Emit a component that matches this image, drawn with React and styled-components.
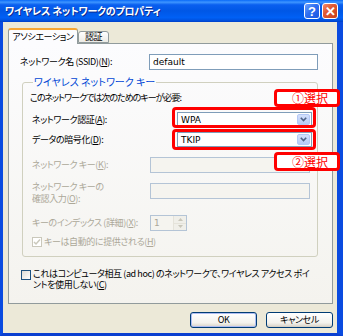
import React from 'react';
import styled, { createGlobalStyle } from 'styled-components';

const Global = createGlobalStyle`
  html, body { margin: 0; padding: 0; background: #ffffff; }
  body {
    font-family: "Noto Sans CJK JP", "Noto Sans", sans-serif;
    font-feature-settings: "palt";
  }
  * { box-sizing: border-box; }
`;

const Window = styled.div`
  position: relative;
  width: 343px;
  height: 336px;
  display: flex;
  flex-direction: column;
  overflow: hidden;
`;

const TitleBar = styled.div`
  height: 22px;
  flex: none;
  display: flex;
  align-items: center;
  justify-content: space-between;
  padding: 0 5px 0 5px;
  background: linear-gradient(
    to bottom,
    #0a6af8 0%,
    #3d95ff 10%,
    #0a5fef 22%,
    #0057e6 50%,
    #0060f5 80%,
    #0052e0 92%,
    #003fc8 100%
  );
`;

const Title = styled.div`
  color: #ffffff;
  font-weight: bold;
  font-size: 10px;
  letter-spacing: -0.2px;
  text-shadow: 1px 1px 0 #0b2a8f;
  line-height: 14px;
`;

const CaptionButtons = styled.div`
  display: flex;
  gap: 2px;
`;

const CapBtn = styled.div`
  width: 16px;
  height: 16px;
  border: 1px solid #ffffff;
  border-radius: 3px;
  display: flex;
  align-items: center;
  justify-content: center;
  color: #ffffff;
  font-family: "Liberation Sans", Arial, sans-serif;
  font-weight: bold;
  font-size: 13px;
  line-height: 1;
  background: ${p => p.$red
    ? 'linear-gradient(135deg, #f08a6c 0%, #e05a33 40%, #c8401a 100%)'
    : 'linear-gradient(135deg, #6ea2ff 0%, #2f6ff0 45%, #1c55e0 100%)'};
`;

const Frame = styled.div`
  flex: 1;
  display: flex;
  flex-direction: column;
  background: #ece9d8;
  border-left: 3px solid #0a4be0;
  border-right: 6px solid #0a4be0;
  border-bottom: 3px solid #0a3fd0;
  padding: 6px 4px 0 5px;
`;

const TabStrip = styled.div`
  display: flex;
  align-items: flex-end;
  height: 15px;
  position: relative;
  z-index: 1;
`;

const Tab = styled.div`
  height: ${p => (p.$active ? 16 : 12)}px;
  width: ${p => p.$w}px;
  margin-bottom: ${p => (p.$active ? -1 : 0)}px;
  border: 1px solid #919b9c;
  border-bottom: ${p => (p.$active ? 'none' : '1px solid #919b9c')};
  border-top: ${p => (p.$active ? '2px solid #f7a634' : '1px solid #919b9c')};
  border-radius: 3px 3px 0 0;
  background: ${p => (p.$active ? '#fcfcfe' : 'linear-gradient(#ffffff, #ecebe5)')};
  font-size: 9px;
  letter-spacing: -0.4px;
  line-height: ${p => (p.$active ? 13 : 10)}px;
  color: #000;
  text-align: center;
  white-space: nowrap;
`;

const Panel = styled.div`
  height: 261px;
  border: 1px solid #919b9c;
  background: linear-gradient(to bottom, #fcfcfe, #f4f3ee);
  padding: 10px 0 0 11px;
  display: flex;
  flex-direction: column;
`;

const Row = styled.div`
  display: flex;
  align-items: ${p => p.$align || 'center'};
  margin-top: ${p => p.$mt || 0}px;
  padding-left: ${p => p.$pl || 0}px;
`;

const Label = styled.div`
  width: ${p => p.$w}px;
  flex: none;
  font-size: 9px;
  letter-spacing: -0.4px;
  line-height: 12px;
  color: ${p => (p.$disabled ? '#aca899' : '#000')};
  white-space: nowrap;
`;

const TextBox = styled.div`
  width: ${p => p.$w}px;
  height: 16px;
  margin-left: ${p => p.$ml || 0}px;
  margin-top: ${p => p.$mt || 0}px;
  border: 1px solid ${p => (p.$disabled ? '#b4c4d6' : '#7f9db9')};
  background: ${p => (p.$disabled ? '#f5f4ef' : '#ffffff')};
  font-family: "DejaVu Sans", "Noto Sans CJK JP", sans-serif;
  font-size: 9px;
  line-height: 14px;
  padding-left: 3px;
  color: #000;
`;

const Group = styled.fieldset`
  margin: 6px 0 0 2px;
  width: 296px;
  height: 181px;
  border: 1px solid #d0d0bf;
  border-radius: 3px;
  padding: 4px 0 0 7px;
  display: flex;
  flex-direction: column;
`;

const Legend = styled.legend`
  color: #0046d5;
  font-size: 10px;
  line-height: 12px;
  padding: 0 1px;
  margin-left: 3px;
`;

const Text = styled.div`
  font-size: 9px;
  letter-spacing: -1px;
  line-height: 12px;
  color: #000;
  white-space: nowrap;
`;

const Select = styled.div`
  width: 135px;
  height: 15px;
  margin-left: 27px;
  border: 1px solid #7f9db9;
  background: #ffffff;
  display: flex;
  align-items: center;
  justify-content: space-between;
  padding: 0 1px 0 3px;
  font-family: "DejaVu Sans", sans-serif;
  font-size: 9px;
  color: #000;
`;

const DropBtn = styled.div`
  width: 13px;
  height: 11px;
  border-radius: 2px;
  background: linear-gradient(#d3e0fc, #b7cbf7);
  border: 1px solid #b4c8f6;
  display: flex;
  align-items: center;
  justify-content: center;
`;

const Spinner = styled.div`
  width: 37px;
  height: 16px;
  border: 1px solid #b4c4d6;
  background: #f5f4ef;
  display: flex;
  justify-content: space-between;
  font-family: "DejaVu Sans", sans-serif;
  font-size: 9px;
  color: #aca899;
  padding-left: 3px;
  line-height: 14px;
`;

const SpinCol = styled.div`
  width: 13px;
  display: flex;
  flex-direction: column;
  border-left: 1px solid #e5e3da;
`;

const SpinBtn = styled.div`
  flex: 1;
  display: flex;
  align-items: center;
  justify-content: center;
  background: #f0efe9;
  border-bottom: ${p => (p.$top ? '1px solid #e5e3da' : 'none')};
`;

const Check = styled.div`
  width: 10px;
  height: 10px;
  flex: none;
  border: 1px solid ${p => (p.$disabled ? '#cac8bb' : '#1c5180')};
  background: ${p => (p.$disabled ? '#ffffff' : 'linear-gradient(135deg, #dcdcd7, #ffffff)')};
  display: flex;
  align-items: center;
  justify-content: center;
  margin-right: 2px;
  margin-top: ${p => p.$mt || 0}px;
`;

const CheckText = styled.div`
  font-size: 9px;
  letter-spacing: -0.4px;
  line-height: ${p => p.$lh || 12}px;
  color: ${p => (p.$disabled ? '#aca899' : '#000')};
  white-space: nowrap;
`;

const ButtonRow = styled.div`
  display: flex;
  justify-content: flex-end;
  gap: 9px;
  margin-top: 8px;
`;

const Button = styled.div`
  width: 67px;
  height: 16px;
  border: 1px solid #003c74;
  border-radius: 3px;
  background: linear-gradient(#ffffff, #f3f2ed 70%, #d6d0c5);
  box-shadow: ${p => (p.$default ? 'inset 0 0 0 1px #aebdf2' : 'inset 0 -1px 0 #d6d0c5')};
  font-size: 9px;
  letter-spacing: -0.4px;
  line-height: 14px;
  text-align: center;
  color: #000;
`;

const RedFrame = styled.div`
  position: absolute;
  left: ${p => p.$x}px;
  top: ${p => p.$y}px;
  width: ${p => p.$w}px;
  height: ${p => p.$h}px;
  border: 3px solid #ff0000;
  border-radius: 4px;
`;

const RedTag = styled.div`
  position: absolute;
  left: ${p => p.$x}px;
  top: ${p => p.$y}px;
  width: ${p => p.$w}px;
  height: ${p => p.$h}px;
  border: 3px solid #ff0000;
  border-radius: 4px;
  background: #ffffff;
  color: #ff0000;
  font-size: 12px;
  line-height: 12px;
  display: flex;
  align-items: center;
  justify-content: flex-end;
  padding-right: 9px;
`;

const Chevron = () => (
  <svg width="7" height="5" viewBox="0 0 7 5">
    <path d="M0.8 0.8 L3.5 3.5 L6.2 0.8" fill="none" stroke="#4d6185" strokeWidth="1.6" />
  </svg>
);

const Arrow = ({ up }) => (
  <svg width="5" height="3" viewBox="0 0 5 3">
    <path d={up ? 'M0 3 L2.5 0 L5 3Z' : 'M0 0 L2.5 3 L5 0Z'} fill="#c9c7ba" />
  </svg>
);

const Tick = ({ color }) => (
  <svg width="8" height="8" viewBox="0 0 8 8">
    <path d="M1 4 L3 6 L7 1.5" fill="none" stroke={color} strokeWidth="1.5" />
  </svg>
);

export default function App() {
  return (
    <>
      <Global />
      <Window>
        <TitleBar>
          <Title>ワイヤレス ネットワークのプロパティ</Title>
          <CaptionButtons>
            <CapBtn>?</CapBtn>
            <CapBtn $red>✕</CapBtn>
          </CaptionButtons>
        </TitleBar>
        <Frame>
          <TabStrip>
            <Tab $active $w={70}>アソシエーション</Tab>
            <Tab $w={31}>認証</Tab>
          </TabStrip>
          <Panel>
            <Row>
              <Label $w={129}>ネットワーク名 (SSID)(<u>N</u>):</Label>
              <TextBox $w={169}>default</TextBox>
            </Row>
            <Group>
              <Legend>ワイヤレス ネットワーク キー</Legend>
              <Text>このネットワークでは次のためのキーが必要:</Text>
              <Row $mt={8} $pl={2}>
                <Label $w={118}>ネットワーク認証(<u>A</u>):</Label>
                <Select>
                  WPA
                  <DropBtn><Chevron /></DropBtn>
                </Select>
              </Row>
              <Row $mt={5} $pl={2}>
                <Label $w={118}>データの暗号化(<u>D</u>):</Label>
                <Select>
                  TKIP
                  <DropBtn><Chevron /></DropBtn>
                </Select>
              </Row>
              <Row $mt={10} $pl={2}>
                <Label $w={118} $disabled>ネットワーク キー(<u>K</u>):</Label>
                <TextBox $w={160} $disabled />
              </Row>
              <Row $mt={8} $pl={2} $align="flex-start">
                <Label $w={118} $disabled>
                  ネットワーク キーの
                  <br />
                  確認入力(<u>O</u>):
                </Label>
                <TextBox $w={160} $mt={2} $disabled />
              </Row>
              <Row $mt={10} $pl={2}>
                <Label $w={118} $disabled>キーのインデックス (詳細)(<u>X</u>):</Label>
                <Spinner>
                  1
                  <SpinCol>
                    <SpinBtn $top><Arrow up /></SpinBtn>
                    <SpinBtn><Arrow /></SpinBtn>
                  </SpinCol>
                </Spinner>
              </Row>
              <Row $mt={5} $pl={2}>
                <Check $disabled><Tick color="#cac8bb" /></Check>
                <CheckText $disabled>キーは自動的に提供される(<u>H</u>)</CheckText>
              </Row>
            </Group>
            <Row $mt={11} $pl={1} $align="flex-start">
              <Check $mt={2} />
              <CheckText $lh={11}>
                これはコンピュータ相互 (ad hoc) のネットワークで、ワイヤレス アクセス ポイ
                <br />
                ントを使用しない(<u>C</u>)
              </CheckText>
            </Row>
          </Panel>
          <ButtonRow>
            <Button $default>OK</Button>
            <Button>キャンセル</Button>
          </ButtonRow>
        </Frame>
        <RedTag $x={274} $y={89} $w={66} $h={18}>①選択</RedTag>
        <RedFrame $x={172} $y={107} $w={144} $h={21} />
        <RedFrame $x={172} $y={129} $w={144} $h={21} />
        <RedTag $x={274} $y={152} $w={66} $h={19}>②選択</RedTag>
      </Window>
    </>
  );
}
